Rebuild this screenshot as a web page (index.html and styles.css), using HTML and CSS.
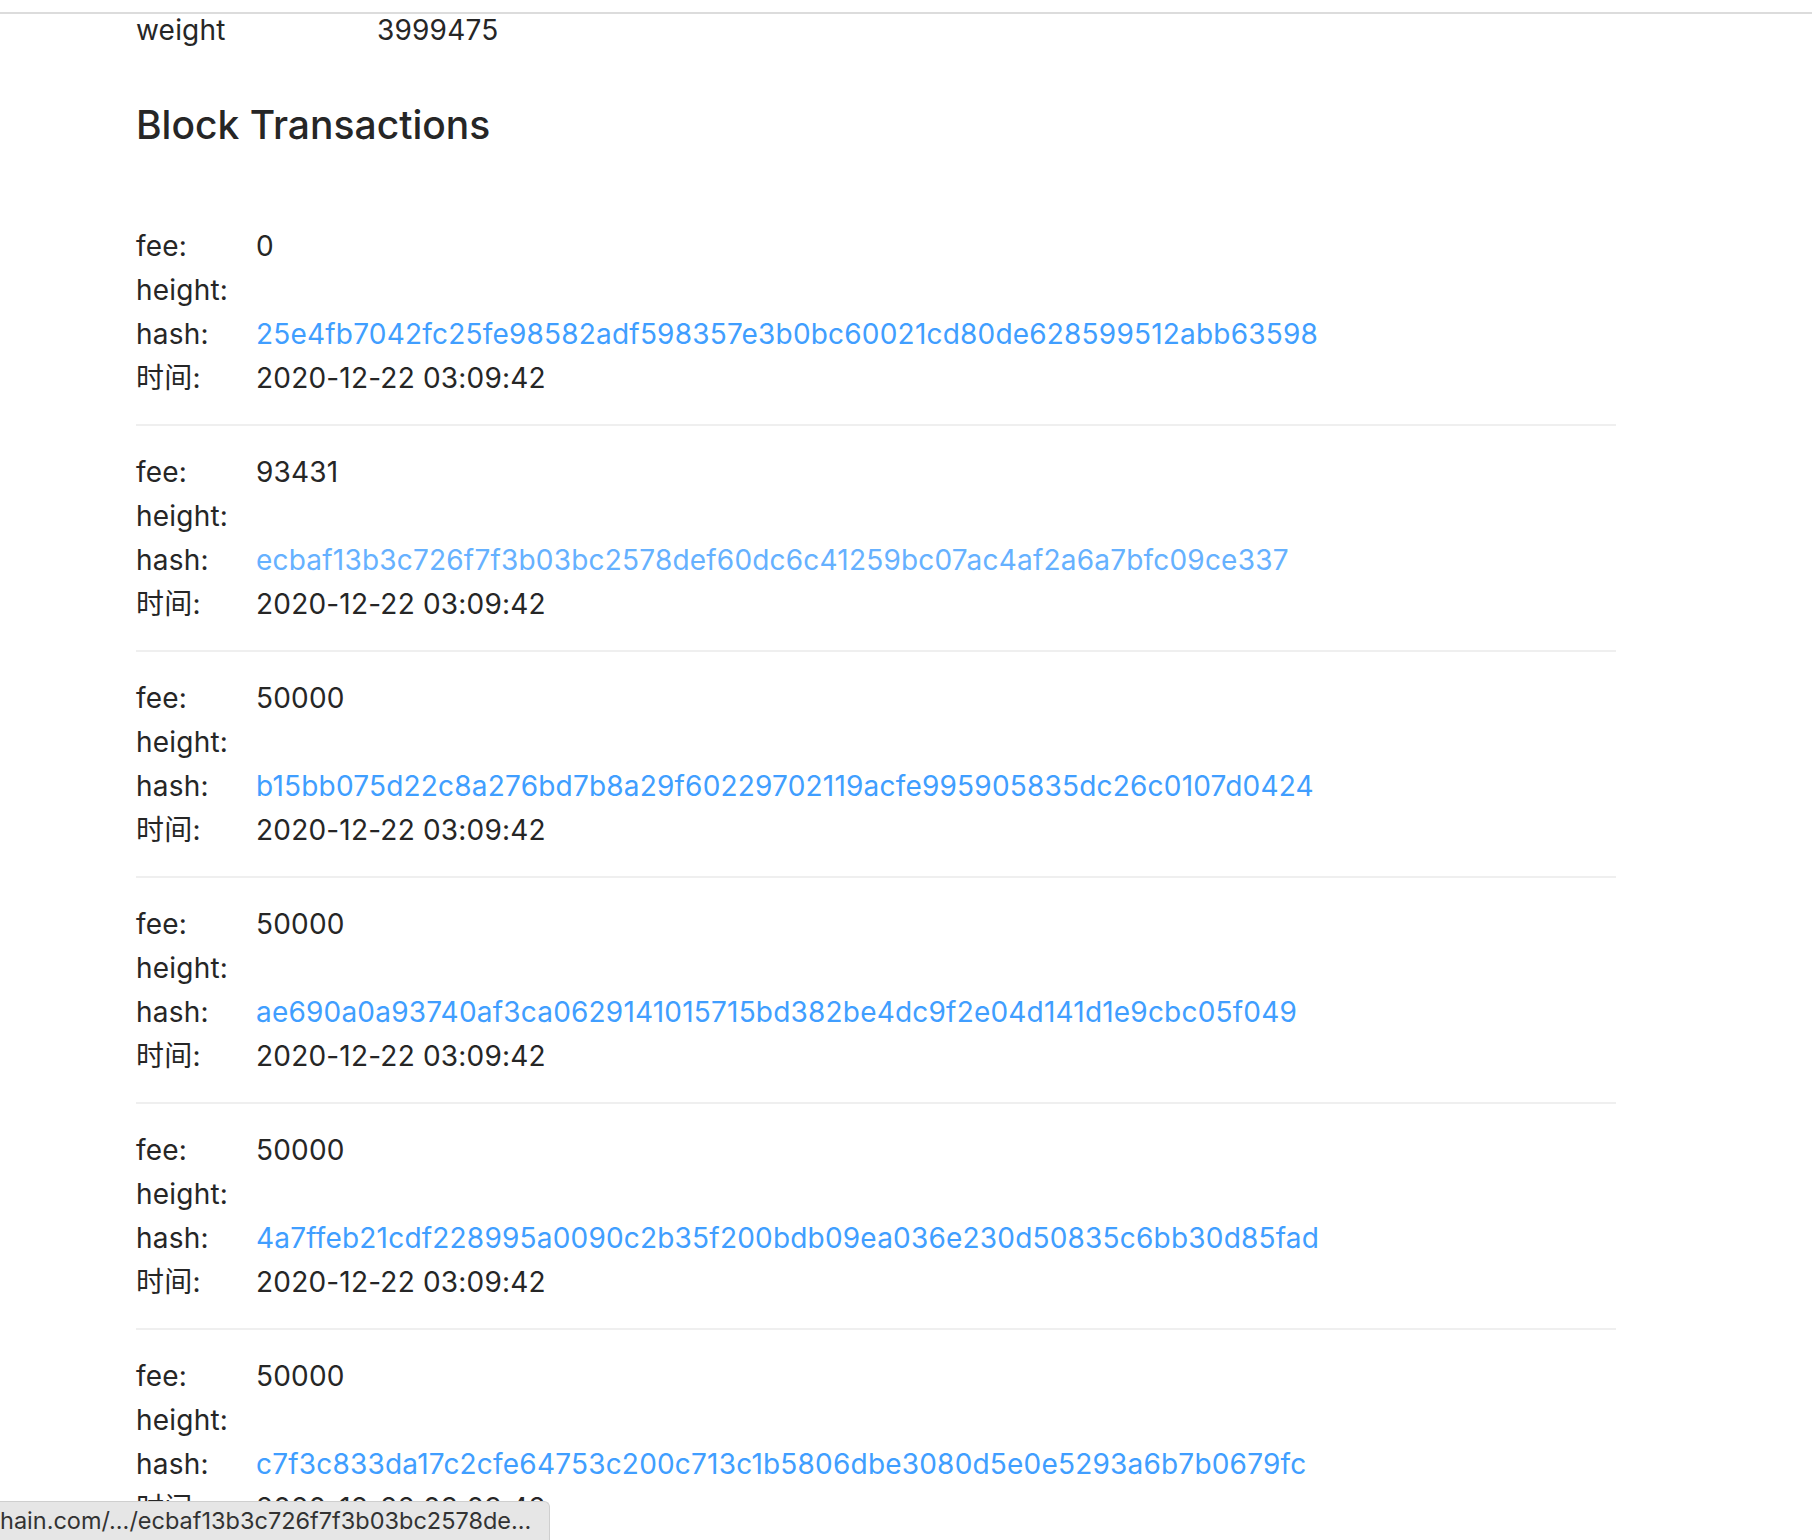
FILE: index.html
```html
<!DOCTYPE html>
<html lang="zh-CN">
<head>
<meta charset="utf-8">
<title>Block Transactions</title>
<link rel="stylesheet" href="styles.css">
</head>
<body>
<div class="topbar"></div>
<main class="container">
  <div class="kv-row">
    <span class="kv-label">weight</span>
    <span class="kv-value">3999475</span>
  </div>
  <h3 class="section-title">Block Transactions</h3>
  <ul class="tx-list">
    <li class="tx">
      <div class="tx-row"><span class="tx-label">fee:</span><span>0</span></div>
      <div class="tx-row"><span class="tx-label">height:</span><span></span></div>
      <div class="tx-row"><span class="tx-label">hash:</span><a class="tx-link" href="#">25e4fb7042fc25fe98582adf598357e3b0bc60021cd80de628599512abb63598</a></div>
      <div class="tx-row"><span class="tx-label">时间:</span><span>2020-12-22 03:09:42</span></div>
    </li>
    <li class="tx">
      <div class="tx-row"><span class="tx-label">fee:</span><span>93431</span></div>
      <div class="tx-row"><span class="tx-label">height:</span><span></span></div>
      <div class="tx-row"><span class="tx-label">hash:</span><a class="tx-link is-hover" href="#">ecbaf13b3c726f7f3b03bc2578def60dc6c41259bc07ac4af2a6a7bfc09ce337</a></div>
      <div class="tx-row"><span class="tx-label">时间:</span><span>2020-12-22 03:09:42</span></div>
    </li>
    <li class="tx">
      <div class="tx-row"><span class="tx-label">fee:</span><span>50000</span></div>
      <div class="tx-row"><span class="tx-label">height:</span><span></span></div>
      <div class="tx-row"><span class="tx-label">hash:</span><a class="tx-link" href="#">b15bb075d22c8a276bd7b8a29f60229702119acfe995905835dc26c0107d0424</a></div>
      <div class="tx-row"><span class="tx-label">时间:</span><span>2020-12-22 03:09:42</span></div>
    </li>
    <li class="tx">
      <div class="tx-row"><span class="tx-label">fee:</span><span>50000</span></div>
      <div class="tx-row"><span class="tx-label">height:</span><span></span></div>
      <div class="tx-row"><span class="tx-label">hash:</span><a class="tx-link" href="#">ae690a0a93740af3ca0629141015715bd382be4dc9f2e04d141d1e9cbc05f049</a></div>
      <div class="tx-row"><span class="tx-label">时间:</span><span>2020-12-22 03:09:42</span></div>
    </li>
    <li class="tx">
      <div class="tx-row"><span class="tx-label">fee:</span><span>50000</span></div>
      <div class="tx-row"><span class="tx-label">height:</span><span></span></div>
      <div class="tx-row"><span class="tx-label">hash:</span><a class="tx-link" href="#">4a7ffeb21cdf228995a0090c2b35f200bdb09ea036e230d50835c6bb30d85fad</a></div>
      <div class="tx-row"><span class="tx-label">时间:</span><span>2020-12-22 03:09:42</span></div>
    </li>
    <li class="tx">
      <div class="tx-row"><span class="tx-label">fee:</span><span>50000</span></div>
      <div class="tx-row"><span class="tx-label">height:</span><span></span></div>
      <div class="tx-row"><span class="tx-label">hash:</span><a class="tx-link" href="#">c7f3c833da17c2cfe64753c200c713c1b5806dbe3080d5e0e5293a6b7b0679fc</a></div>
      <div class="tx-row"><span class="tx-label">时间:</span><span>2020-12-22 03:09:42</span></div>
    </li>
  </ul>
</main>
<div class="statusbar">hain.com/.../ecbaf13b3c726f7f3b03bc2578de...</div>
</body>
</html>
```
FILE: styles.css
```css
html, body {
  margin: 0;
  padding: 0;
  background: #ffffff;
}
body {
  font-family: Inter, "Noto Sans CJK SC", sans-serif;
  color: #262626;
  font-size: 28px;
  letter-spacing: 0.2px;
  overflow: hidden;
  height: 1540px;
}
.topbar {
  height: 12px;
  border-bottom: 2px solid #dcdcdc;
}
.container {
  width: 1480px;
  padding-left: 136px;
}
.kv-row {
  display: flex;
  line-height: 32px;
}
.kv-label {
  width: 241px;
}
.section-title {
  margin: 55px 0 51px;
  font-size: 39px;
  line-height: 48px;
  font-weight: 500;
  letter-spacing: 0;
}
.tx-list {
  list-style: none;
  margin: 0;
  padding: 0;
}
.tx {
  padding: 24px 0;
  border-bottom: 2px solid #efefef;
}
.tx-row {
  display: flex;
  line-height: 44px;
  height: 44px;
}
.tx-label {
  width: 120px;
  flex: none;
}
.tx-link {
  color: #409eff;
  text-decoration: none;
}
.tx-link.is-hover {
  color: #66b1ff;
}
.statusbar {
  position: fixed;
  left: 0;
  bottom: 0;
  width: 550px;
  height: 39px;
  box-sizing: border-box;
  background: #e6e6e6;
  border: 1px solid #cfcfcf;
  border-left: none;
  border-bottom: none;
  border-top-right-radius: 6px;
  color: #333;
  font-family: Inter, sans-serif;
  font-size: 23.5px;
  letter-spacing: 0;
  line-height: 38px;
  white-space: nowrap;
  overflow: hidden;
}
```
